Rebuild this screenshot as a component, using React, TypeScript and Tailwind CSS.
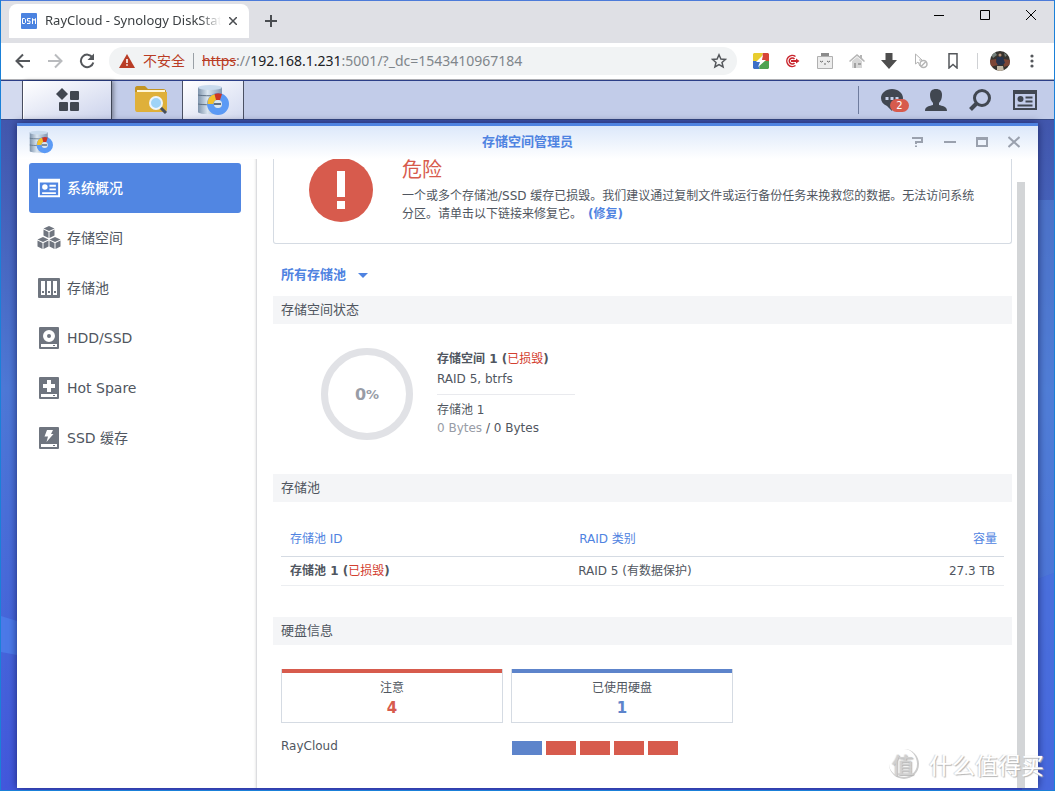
import type { ReactNode } from "react"

interface NavItem {
  label: string
  icon: ReactNode
}

const IconCard = ({ className }: { className?: string }) => (
  <svg viewBox="0 0 24 20" className={className} fill="currentColor">
    <path
      fillRule="evenodd"
      d="M0 0h24v20H0zM2 4v14h20V4zM7.500 6a3 3 0 1 1 0 6 3 3 0 0 1 0-6zM12.500 6.500h7v2h-7zM12.500 10.500h7v2h-7zM4.500 14.500h15v2h-15z"
    />
  </svg>
)

const Cube = ({ x, y }: { x: number; y: number }) => (
  <g transform={`translate(${x} ${y})`}>
    <path d="M5.500 0 11 2.500 5.500 5 0 2.500z" />
    <path d="M0 3.600 5 5.900V12L0 9.600z" />
    <path d="M11 3.600 6 5.900V12l5-2.400z" />
  </g>
)

const IconCubes = () => (
  <svg viewBox="0 0 24 24" className="h-6 w-6 shrink-0" fill="currentColor">
    <Cube x={6.5} y={0} />
    <Cube x={0.5} y={11} />
    <Cube x={12.5} y={11} />
  </svg>
)

const IconPool = () => (
  <svg viewBox="0 0 22 20" className="h-5 w-[22px]">
    <rect width="22" height="20" rx="1" fill="currentColor" />
    <path d="M3 3h4v14H3zM9 3h4v14H9zM15 3h4v14h-4z" fill="#fff" />
    <path d="M4 13h2v2H4zM10 13h2v2h-2zM16 13h2v2h-2z" fill="currentColor" />
  </svg>
)

const Drive = ({ children }: { children: ReactNode }) => (
  <svg viewBox="0 0 20 22" className="h-[22px] w-5">
    <rect width="20" height="22" rx="1" fill="currentColor" />
    <path d="M2 17h16v3H2z" fill="#fff" />
    <path d="M14 18h2v1h-2z" fill="currentColor" />
    {children}
  </svg>
)

const navItems: NavItem[] = [
  { label: "系统概况", icon: <IconCard className="h-5 w-[22px]" /> },
  { label: "存储空间", icon: <IconCubes /> },
  { label: "存储池", icon: <IconPool /> },
  {
    label: "HDD/SSD",
    icon: (
      <Drive>
        <circle cx="10" cy="9" r="4" fill="none" stroke="#fff" strokeWidth="4" />
      </Drive>
    ),
  },
  {
    label: "Hot Spare",
    icon: (
      <Drive>
        <path d="M8 3h4v4h4v4h-4v4H8v-4H4V7h4z" fill="#fff" />
      </Drive>
    ),
  },
  {
    label: "SSD 缓存",
    icon: (
      <Drive>
        <path d="M8 3h6l-2 4h2.500L7.500 15 9 9.500H5.500z" fill="#fff" />
      </Drive>
    ),
  },
]

const StorageIcon = ({ className }: { className: string }) => (
  <svg viewBox="0 0 32 32" className={className}>
    <defs>
      <linearGradient id="cyl" x1="0" x2="1">
        <stop offset="0" stopColor="#7d93ab" />
        <stop offset="0.4" stopColor="#dbe6f0" />
        <stop offset="1" stopColor="#8197b1" />
      </linearGradient>
    </defs>
    <path d="M1 3v25c0 3 24 3 24 0V3z" fill="url(#cyl)" />
    <ellipse cx="13" cy="3.500" rx="12" ry="2.500" fill="#c9dbed" />
    <path d="M1 11c4 1 20 1 24 0M1 20c4 1 20 1 24 0" fill="none" stroke="#5e7186" />
    <circle cx="21" cy="20" r="7.500" fill="none" stroke="#5b9af5" strokeWidth="7" />
    <path d="M10.500 20a10.500 10.500 0 0 1 7-10l2 6a4 4 0 0 0-3 4z" fill="#f3c02c" />
    <path d="M17.500 10a11 11 0 0 1 7.500 0l-2 6h-4z" fill="#cc3524" />
    <circle cx="21" cy="20" r="4" fill="#dbe6f0" />
    <path d="M17 20h7" stroke="#5e7186" strokeWidth="2" />
  </svg>
)

const BrowserChrome = () => (
  <header className="font-['Noto_Sans','Noto_Sans_CJK_SC',sans-serif]">
    <div className="flex h-[43px] items-end justify-between border-t border-[#4c7bd9] bg-[#dfe0e5] pl-2">
      <div className="flex items-center">
        <div className="flex h-[34px] w-60 items-center rounded-t-lg bg-white pr-2 pl-3">
          <svg viewBox="0 0 16 16" className="h-4 w-4 shrink-0">
            <rect width="16" height="16" rx="1" fill="#4b83e0" />
            <path
              d="M1.500 5.500h2l1 1v3l-1 1h-2zM9.500 5.500h-3v2.500h2.500v2.500h-3M11.500 11V5.500l1.500 2 1.500-2V11"
              fill="none"
              stroke="#fff"
            />
          </svg>
          <span className="mr-1 ml-2 flex-1 overflow-hidden text-[13px] whitespace-nowrap text-[#3c4043] [mask-image:linear-gradient(to_right,#000_88%,transparent)]">
            RayCloud - Synology DiskStation
          </span>
          <button aria-label="Close tab" className="p-1">
            <svg viewBox="0 0 8 8" className="h-2 w-2" stroke="#4a4d51" strokeWidth="1.500">
              <path d="M0 0l8 8M8 0 0 8" />
            </svg>
          </button>
        </div>
        <button aria-label="New tab" className="p-4">
          <svg viewBox="0 0 12 12" className="h-3 w-3" stroke="#4a4d51" strokeWidth="2">
            <path d="M6 0v12M0 6h12" />
          </svg>
        </button>
      </div>
      <div className="flex gap-9 self-start pt-[9px] pr-[18px]">
        <button aria-label="Minimize">
          <svg viewBox="0 0 10 10" className="h-[10px] w-[10px]" stroke="#000">
            <path d="M0 5.500h10" />
          </svg>
        </button>
        <button aria-label="Maximize">
          <svg viewBox="0 0 10 10" className="h-[10px] w-[10px]" fill="none" stroke="#000">
            <path d="M.5.500h9v9h-9z" />
          </svg>
        </button>
        <button aria-label="Close">
          <svg viewBox="0 0 10 10" className="h-[10px] w-[10px]" stroke="#000">
            <path d="M0 0l10 10M10 0 0 10" />
          </svg>
        </button>
      </div>
    </div>

    <div className="flex h-[37px] items-center border-b border-[#adaeb3] bg-white pl-[14px]">
      <div className="flex gap-4">
        <button aria-label="Back">
          <svg viewBox="0 0 16 16" className="h-4 w-4" fill="none" stroke="#54575b" strokeWidth="2">
            <path d="M15 8H2M8 1.500 1.500 8 8 14.500" />
          </svg>
        </button>
        <button aria-label="Forward">
          <svg viewBox="0 0 16 16" className="h-4 w-4" fill="none" stroke="#b9bbbe" strokeWidth="2">
            <path d="M1 8h13M8 1.500 14.500 8 8 14.500" />
          </svg>
        </button>
        <button aria-label="Reload">
          <svg viewBox="0 0 16 16" className="h-4 w-4">
            <path d="M13.500 4.500A6.300 6.300 0 1 0 14.300 9.500" fill="none" stroke="#54575b" strokeWidth="2" />
            <path d="M15 .500V7H8.500z" fill="#54575b" />
          </svg>
        </button>
      </div>
      <label className="ml-[14px] flex h-7 flex-1 items-center rounded-full bg-[#f1f3f4] pr-2.5 pl-2.5 text-sm">
        <svg viewBox="0 0 16 14" className="h-[14px] w-4">
          <path d="M8 0l8 14H0z" fill="#b93c25" />
          <path d="M7.200 5h1.600v4H7.200zM7.200 10.200h1.600v1.600H7.200z" fill="#fff" />
        </svg>
        <span className="ml-2 text-[#b93c25]">不安全</span>
        <span className="mx-2 h-4 w-px bg-[#9aa0a6]" />
        <span className="text-[#b93c25] line-through">https</span>
        <span className="text-[#80868b]">://</span>
        <span className="text-[#202124]">192.168.1.231</span>
        <input
          aria-label="Address"
          className="min-w-0 flex-1 bg-transparent text-[#80868b] outline-none"
          defaultValue=":5001/?_dc=1543410967184"
        />
        <button aria-label="Bookmark this page">
          <svg viewBox="0 0 16 16" className="h-4 w-4" fill="none" stroke="#54575b" strokeWidth="1.500">
            <path d="M8 1.800l1.900 4.200 4.600.4-3.500 3 1.100 4.500L8 11.500l-4.100 2.400L5 9.400l-3.500-3 4.600-.4z" />
          </svg>
        </button>
      </label>
      <div className="flex items-center gap-4 pl-4">
        <button aria-label="Shortcuts">
          <svg viewBox="0 0 16 16" className="h-4 w-4">
            <path d="M1 0h9L8 8H0V1z" fill="#e8cd2f" />
            <path d="M10 0h5l1 1v8H8z" fill="#d64537" />
            <path d="M0 8h8l-2 8H1l-1-1z" fill="#3c6ec6" />
            <path d="M8 8h8v7l-1 1H6z" fill="#4ea251" />
            <path d="M10 2 3 9h4l-2 5 8-7H9z" fill="#fff" />
          </svg>
        </button>
        <button aria-label="Target">
          <svg viewBox="0 0 16 16" className="h-4 w-4" fill="none" stroke="#c9252d">
            <path d="M10.500 3.500A5.500 5.500 0 1 0 10.500 12.500" strokeWidth="1.500" />
            <path d="M9.500 6a3 3 0 1 0 0 4" strokeWidth="1.500" />
            <path d="M6 8h7" strokeWidth="2" />
            <path d="M11 5.500v5L14.500 8z" fill="#c9252d" stroke="none" />
          </svg>
        </button>
        <button aria-label="Robot">
          <svg viewBox="0 0 16 16" className="h-4 w-4" fill="none" stroke="#8b8b8b">
            <path d="M.5 3.500h15v12H.5z" fill="#ececec" stroke="#b0b0b0" />
            <path d="M4 1.500h8" strokeWidth="3" />
            <path d="M3 8l1.500 1L6 8M10 8l1.500 1L13 8M7 11h2" stroke="#666" />
          </svg>
        </button>
        <button aria-label="Home">
          <svg viewBox="0 0 16 16" className="h-4 w-4">
            <path d="M0 8 8 1l3 2.500V2h2v3l3 3-1 1-7-6-7 6z" fill="#b5b5b5" />
            <path d="M3 8l5-4 5 4v7H3z" fill="#d6d6d6" />
            <path d="M5 10h2v5H5zM9 10h3v2H9z" fill="#a2a2a2" />
          </svg>
        </button>
        <button aria-label="Downloads">
          <svg viewBox="0 0 16 16" className="h-4 w-4" fill="#4e4e4e">
            <path d="M4.500 0h7v7H16l-8 9-8-9h4.500z" />
          </svg>
        </button>
        <button aria-label="Cursor">
          <svg viewBox="0 0 16 16" className="h-4 w-4" fill="none" stroke="#b4b4b4">
            <path d="M2.500 1v10l2.500-2 2 4M2.500 1 9 7H6" />
            <circle cx="10.500" cy="11" r="3.500" strokeWidth="1.500" />
            <path d="M8 13.500l5-5" strokeWidth="1.500" />
          </svg>
        </button>
        <button aria-label="Bookmarks">
          <svg viewBox="0 0 16 16" className="h-4 w-4" fill="none" stroke="#54575b" strokeWidth="1.500">
            <path d="M4 .800h8v14.200l-4-3.500L4 15z" />
          </svg>
        </button>
      </div>
      <span className="ml-4 h-4 w-px bg-[#cfd1d4]" />
      <button aria-label="Profile" className="ml-3">
        <svg viewBox="0 0 20 20" className="h-5 w-5 rounded-full">
          <path d="M0 0h20v20H0z" fill="#37342f" />
          <path d="M0 9l6-1 2 6-8 2zM13 8l7 1v5l-6 2z" fill="#7d4636" />
          <path d="M7 6l6 0 2 6-3 2H8l-2-3z" fill="#27334d" />
          <circle cx="10" cy="4" r="1.500" fill="#b99178" />
          <path d="M7 15h6l1 5H7z" fill="#c4b8a5" />
          <path d="M1 3l4-2 2 3-4 3zM14 2l3 2-2 2z" fill="#74807b" />
        </svg>
      </button>
      <button aria-label="Menu" className="mr-4 ml-4">
        <svg viewBox="0 0 12 14" className="h-[14px] w-3" fill="#54575b">
          <circle cx="6" cy="2" r="1.600" />
          <circle cx="6" cy="7" r="1.600" />
          <circle cx="6" cy="12" r="1.600" />
        </svg>
      </button>
    </div>
  </header>
)

const Taskbar = () => (
  <div className="flex h-10 shrink-0 border-t border-b border-t-[#2c3f88] border-b-[#364a86] bg-[#c2cce9] text-[#414751]">
    <div className="w-[22px] border-r border-[#4b5164] bg-[#d3daef]" />
    <button
      aria-label="Main menu"
      className="flex w-[89px] items-center justify-center border-r border-l border-r-[#3f4656] border-l-white bg-linear-to-br from-white to-[#ccd3ec] shadow-[2px_0_4px_rgba(0,0,0,0.35)]"
    >
      <svg viewBox="0 0 24 24" className="h-6 w-6" fill="currentColor">
        <path d="M6 0l6 6-6 6-6-6z" />
        <rect x="14" y="3" width="9" height="9" rx="1" />
        <rect x="3" y="14" width="9" height="9" rx="1" />
        <rect x="14" y="14" width="9" height="9" rx="1" />
      </svg>
    </button>
    <button aria-label="File Station" className="flex w-[70px] items-center justify-end pr-3.5">
      <svg viewBox="0 0 34 28" className="h-7 w-[34px]">
        <path d="M1 2c0-1 1-2 2-2h8l3 3h15c2 0 3 1 3 2v4H1z" fill="#c39524" />
        <path d="M3 4h28v3H3z" fill="#fff6d6" />
        <path d="M1 6h32v17c0 2-1 3-2 3H3c-1 0-2-1-2-3z" fill="#dfb03a" />
        <path d="M26 21l6 6" stroke="#46505d" strokeWidth="3" />
        <circle cx="22" cy="17" r="6" fill="#9ed3f7" stroke="#eef5fa" strokeWidth="2" />
      </svg>
    </button>
    <button
      aria-label="存储空间管理员"
      className="flex w-[62px] items-center justify-center border-r border-l border-[#4b5164] bg-linear-to-br from-white to-[#d3daf0]"
    >
      <StorageIcon className="h-8 w-8" />
    </button>
    <div className="ml-auto flex items-center gap-[22px] pr-[17px]">
      <span className="h-7 w-px bg-[#6f7c9e]" />
      <button aria-label="Notifications" className="relative">
        <svg viewBox="0 0 22 22" className="h-[22px] w-[22px]">
          <path d="M11 0c6 0 11 4 11 9s-4 9-10 9l-1 4-5-5c-4-1.500-6-4.500-6-8 0-5 5-9 11-9z" fill="currentColor" />
          <path d="M4.500 8h3v3h-3zM9.500 8h3v3h-3zM14.500 8h3v3h-3z" fill="#c8d0e9" />
        </svg>
        <span className="absolute top-2.5 left-[9px] flex h-[13px] w-[19px] items-center justify-center rounded-full bg-[#d75b4d] text-[10px] text-white">
          2
        </span>
      </button>
      <button aria-label="Account">
        <svg viewBox="0 0 22 22" className="h-[22px] w-[22px]" fill="currentColor">
          <path d="M11 0c4 0 6 2 6 6 0 3-1 6-3 8v2c3 1 8 1 8 6H0c0-5 5-5 8-6v-2c-2-2-3-5-3-8 0-4 2-6 6-6z" />
        </svg>
      </button>
      <button aria-label="Search">
        <svg viewBox="0 0 22 22" className="h-[22px] w-[22px]" fill="none" stroke="currentColor">
          <circle cx="13" cy="9" r="7.500" strokeWidth="3" />
          <path d="M8 14l-6.500 6.500" strokeWidth="4" />
        </svg>
      </button>
      <button aria-label="Widgets">
        <IconCard className="h-5 w-6" />
      </button>
    </div>
  </div>
)

const WindowHeader = () => (
  <div className="grid h-9 shrink-0 grid-cols-[1fr_auto_1fr] items-center border-t-[3px] border-[#4f83e1] bg-linear-to-b from-[#dce8fa] to-white px-3 pb-0.5">
    <StorageIcon className="h-6 w-6" />
    <h1 className="text-[13px] font-bold text-[#4f83e1]">存储空间管理员</h1>
    <div className="flex justify-end gap-5 pr-1.5 text-[#9aa1ae]">
      <button aria-label="Help">
        <svg viewBox="0 0 12 12" className="h-3 w-3" fill="none" stroke="currentColor" strokeWidth="2">
          <path d="M0 2h10v4H4v2M4 9.500v1.500" />
        </svg>
      </button>
      <button aria-label="Minimize window">
        <svg viewBox="0 0 12 12" className="h-3 w-3" stroke="currentColor" strokeWidth="2">
          <path d="M0 6h12" />
        </svg>
      </button>
      <button aria-label="Maximize window">
        <svg viewBox="0 0 12 12" className="h-3 w-3" fill="none" stroke="currentColor" strokeWidth="2">
          <path d="M1 2v8h10V2" />
          <path d="M0 2.500h12" strokeWidth="3" />
        </svg>
      </button>
      <button aria-label="Close window">
        <svg viewBox="0 0 12 12" className="h-3 w-3" stroke="currentColor" strokeWidth="2">
          <path d="M.500 1l11 10M11.500 1l-11 10" />
        </svg>
      </button>
    </div>
  </div>
)

const Sidebar = () => (
  <nav className="w-60 shrink-0 border-r border-[#dcdde0] pt-1 pr-[15px] pl-3 shadow-[inset_-2px_0_2px_-1px_rgba(0,0,0,0.08)]">
    {navItems.map((item, i) => (
      <button
        key={item.label}
        className={
          i === 0
            ? "flex h-[50px] w-full items-center rounded-[3px] bg-[#5186e2] pl-[9px] text-sm text-white"
            : "flex h-[50px] w-full items-center pl-[9px] text-sm text-[#6f757f]"
        }
      >
        <span className="flex w-[22px] justify-center">{item.icon}</span>
        <span className={i === 0 ? "ml-[7px] font-medium" : "ml-[7px] text-[#505660]"}>
          {item.label}
        </span>
      </button>
    ))}
  </nav>
)

const SectionTitle = ({ children }: { children: ReactNode }) => (
  <h2 className="flex h-7 items-center bg-[#f4f5f7] px-2 text-[13px]">{children}</h2>
)

interface CardProps {
  label: string
  count: number
  className: string
}

const DiskCard = ({ label, count, className }: CardProps) => (
  <div className="h-[54px] w-[222px] border border-t-0 border-[#d5dbe3]">
    <div className={`h-1 ${className}`} />
    <p className="mt-1.5 text-center leading-[18px]">{label}</p>
    <p
      className={
        count > 1
          ? "text-center text-[15px] leading-[22px] font-bold text-[#d75b4d]"
          : "text-center text-[15px] leading-[22px] font-bold text-[#5d84cb]"
      }
    >
      {count}
    </p>
  </div>
)

const disks = ["ok", "bad", "bad", "bad", "bad"]

const Overview = () => (
  <main className="min-w-0 flex-1 overflow-hidden pl-4 text-xs text-[#505660]">
    <div className="flex h-[85px] rounded-b-[3px] border border-t-0 border-[#d5dbe3] pr-7 pl-[35px]">
      <svg viewBox="0 1 64 63" className="h-[63px] w-16 shrink-0">
        <circle cx="32" cy="32" r="32" fill="#d75b4d" />
        <path d="M28 13h8v26h-8zM28 43h8v8h-8z" fill="#fff" />
      </svg>
      <div className="ml-[29px]">
        <h2 className="text-xl leading-[22px] text-[#d75b4d]">危险</h2>
        <p className="mt-1.5 leading-[18px]">
          一个或多个存储池/SSD 缓存已损毁。我们建议通过复制文件或运行备份任务来挽救您的数据。无法访问系统分区。请单击以下链接来修复它。
          <a href="#repair" className="ml-1.5 font-bold text-[#4f83e1]">
            (修复)
          </a>
        </p>
      </div>
    </div>

    <div className="flex h-[52px] items-center pt-2.5 pl-2 text-[#4f83e1]">
      <select
        aria-label="存储池"
        className="appearance-none bg-transparent text-[13px] leading-5 font-bold outline-none"
      >
        <option>所有存储池</option>
      </select>
      <svg viewBox="0 0 10 5" className="ml-[11px] h-[5px] w-[10px]" fill="currentColor">
        <path d="M0 0h10L5 5z" />
      </svg>
    </div>

    <SectionTitle>存储空间状态</SectionTitle>
    <div className="flex h-[150px] pt-6 pl-12">
      <div className="flex h-[92px] w-[92px] items-center justify-center rounded-full border-[7px] border-[#e1e2e6] pt-0.5 font-bold text-[#989ca6]">
        <span className="text-base">0</span>
        <span className="text-[13px]">%</span>
      </div>
      <div className="ml-6 pt-px">
        <p className="leading-5 font-bold">
          存储空间 1 (<span className="font-normal text-[#d3402f]">已损毁</span>)
        </p>
        <p className="leading-5">RAID 5, btrfs</p>
        <hr className="mt-[5px] mb-1.5 w-[138px] border-[#e9eaee]" />
        <p className="leading-[18px]">存储池 1</p>
        <p className="leading-[18px]">
          <span className="text-[#989ca6]">0 Bytes</span> / 0 Bytes
        </p>
      </div>
    </div>

    <SectionTitle>存储池</SectionTitle>
    <div className="h-[115px] px-2 pt-[18px]">
      <table className="w-full table-fixed">
        <thead>
          <tr className="h-9 border-b border-[#d5dbe3] text-[#4f83e1]">
            <th className="w-[40%] pt-0.5 pl-[9px] text-left font-normal">存储池 ID</th>
            <th className="w-[40%] pt-0.5 pl-[9px] text-left font-normal">RAID 类别</th>
            <th className="pt-0.5 pr-[7px] text-right font-normal">容量</th>
          </tr>
        </thead>
        <tbody>
          <tr className="h-[29px] border-b border-[#eceef1]">
            <td className="pl-[9px] font-bold">
              存储池 1 (<span className="font-normal text-[#d3402f]">已损毁</span>)
            </td>
            <td className="pl-2">RAID 5 (有数据保护)</td>
            <td className="pr-[9px] text-right">27.3 TB</td>
          </tr>
        </tbody>
      </table>
    </div>

    <SectionTitle>硬盘信息</SectionTitle>
    <div className="flex gap-2 pt-6 pl-2">
      <DiskCard label="注意" count={4} className="bg-[#d75b4d]" />
      <DiskCard label="已使用硬盘" count={1} className="bg-[#5d84cb]" />
    </div>
    <div className="flex items-center pt-[13px] pl-2">
      <span className="w-[231px] leading-5">RayCloud</span>
      <div className="flex gap-1 pt-1">
        {disks.map((state, i) => (
          <span
            key={i}
            className={state === "ok" ? "h-[14px] w-[30px] bg-[#5d84cb]" : "h-[14px] w-[30px] bg-[#d75b4d]"}
          />
        ))}
      </div>
    </div>
  </main>
)

export default function App() {
  return (
    <div className="relative flex h-screen flex-col overflow-hidden border-x border-b border-[#1a80d8] font-['DejaVu_Sans','Noto_Sans_CJK_SC',sans-serif]">
      <BrowserChrome />
      <Taskbar />
      <div className="relative flex min-h-0 flex-1 flex-col bg-linear-to-b from-[#4257ad] via-[#4d78d6] via-40% to-[#4257dc] px-4 pt-[3px] pb-0.5">
        <svg
          viewBox="0 0 1053 670"
          preserveAspectRatio="none"
          className="absolute inset-0 h-full w-full"
        >
          <path d="M0 496l16 5v34l-16-3z" fill="#4b79e8" />
          <path d="M1021 80h32v373l-32 12z" fill="#5484d8" opacity="0.500" />
          <path d="M1021 465l32-12v217h-32z" fill="#4c74e0" opacity="0.600" />
        </svg>
        <div className="relative flex min-h-0 flex-1 flex-col bg-white shadow-[0_0_8px_rgba(0,0,50,0.600)]">
          <WindowHeader />
          <div className="flex min-h-0 flex-1">
            <Sidebar />
            <Overview />
            <div className="ml-[5px] w-[21px] pt-[23px]">
              <div className="h-full w-2 bg-[#d3d5d7]" />
            </div>
          </div>
        </div>
      </div>
      <div className="pointer-events-none absolute right-2.5 bottom-2.5 flex items-center gap-2.5 font-['Noto_Sans_CJK_SC',sans-serif] text-white [text-shadow:1px_1px_1px_#b4b4b4,-1px_0_1px_#d6d6d6]">
        <span className="flex h-[30px] w-[30px] items-center justify-center rounded-full border-r-2 border-b-2 border-[#cccccc] text-[22px] text-[#d0d0d0]">
          值
        </span>
        <span className="text-[23px] leading-8">什么值得买</span>
      </div>
    </div>
  )
}
